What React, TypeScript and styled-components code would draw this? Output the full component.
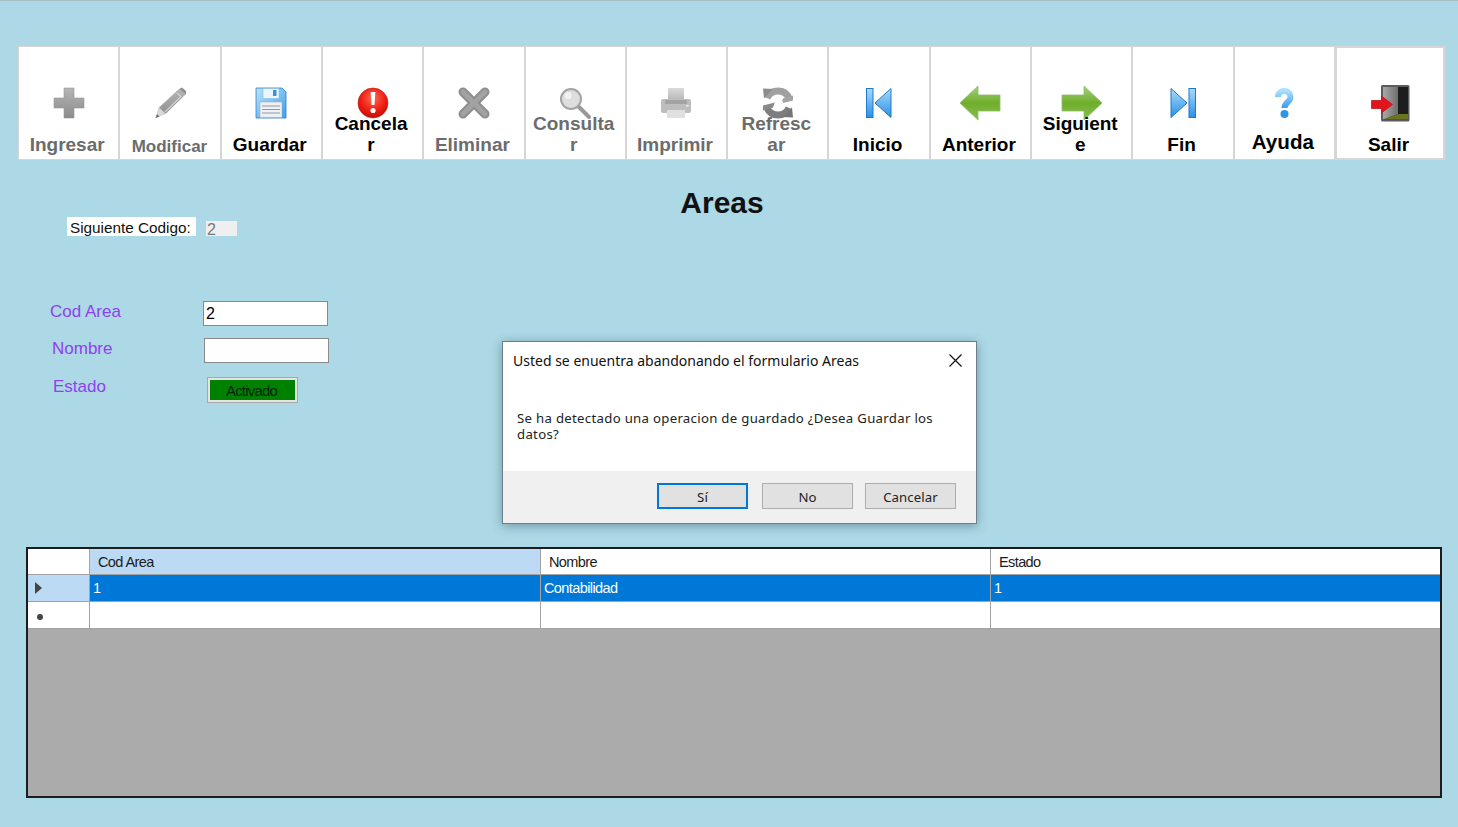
import React from "react";
import styled, { createGlobalStyle } from "styled-components";

const Global = createGlobalStyle`
  html, body { margin: 0; padding: 0; height: 100%; overflow: hidden; }
  body { background: #add8e6; font-family: "Liberation Sans", Arial, sans-serif; }
`;

const Page = styled.div`
  position: relative;
  width: 1458px;
  height: 827px;
  box-sizing: border-box;
  background: #add8e6;
  border-top: 1px solid #a9bcc4;
  padding: 45px 13px 0 18px;
  overflow: hidden;
`;

const Toolbar = styled.div`
  display: grid;
  grid-template-columns: repeat(13, 1fr) 110px;
  height: 114px;
`;

const ToolButton = styled.div<{ $last?: boolean }>`
  display: grid;
  box-sizing: border-box;
  background: #fff;
  border: ${(p) => (p.$last ? "2px" : "1px")} solid #d6d6d6;
  overflow: hidden;
`;

const IconSlot = styled.span`
  grid-area: 1 / 1;
  justify-self: center;
  align-self: start;
  width: 48px;
  height: 48px;
  margin-top: 32px;
`;

const ToolLabel = styled.span<{ $off?: boolean; $size?: number; $bottom?: number; $right?: number }>`
  grid-area: 1 / 1;
  z-index: 1;
  justify-self: center;
  align-self: end;
  text-align: center;
  box-sizing: border-box;
  width: 100%;
  font-weight: 700;
  font-size: ${(p) => p.$size ?? 19}px;
  line-height: 21px;
  padding-bottom: ${(p) => p.$bottom ?? 4}px;
  padding-right: ${(p) => p.$right ?? 3}px;
  color: ${(p) => (p.$off ? "#6c6c6c" : "#000")};
  white-space: pre-line;
`;

const Head = styled.div`
  display: grid;
  height: 72px;
  margin-top: 10px;
`;

const Title = styled.h1`
  grid-area: 1 / 1;
  justify-self: center;
  margin: 16px 19px 0 0;
  font-size: 30px;
  line-height: 34px;
  font-weight: 700;
  color: #111;
`;

const NextCode = styled.div`
  grid-area: 1 / 1;
  display: flex;
  align-items: flex-end;
  gap: 10px;
  margin: 47px 0 0 49px;
  height: 19px;
`;

const NextLabel = styled.span`
  background: #fff;
  width: 129px;
  height: 19px;
  box-sizing: border-box;
  padding-left: 3px;
  font-size: 15.3px;
  line-height: 22px;
  color: #111;
`;

const NextValue = styled.span`
  background: #efefef;
  width: 31px;
  height: 15px;
  box-sizing: border-box;
  padding-left: 1px;
  font-size: 16px;
  line-height: 17px;
  color: #777;
`;

const Form = styled.div`
  display: flex;
  flex-direction: column;
  margin-top: 59px;
  height: 122px;
`;

const FormRow = styled.div<{ $shift: number; $gap: number; $h: number }>`
  display: grid;
  grid-template-columns: ${(p) => p.$gap}px auto;
  margin-left: ${(p) => p.$shift}px;
  height: ${(p) => p.$h}px;
  align-items: start;
`;

const FieldLabel = styled.label`
  font-size: 17px;
  line-height: 20px;
  margin-top: 1px;
  color: #9040ee;
`;

const TextBox = styled.input`
  box-sizing: border-box;
  width: 125px;
  height: 25px;
  border: 1px solid #8a8a8a;
  background: #fff;
  padding: 0 2px;
  margin: 0;
  font: 16px "Liberation Sans", Arial, sans-serif;
  color: #000;
  outline: none;
`;

const StateButton = styled.div`
  box-sizing: border-box;
  width: 91px;
  height: 26px;
  margin-top: 1px;
  border: 1px solid #a8a8a8;
  background: #e4e4e4;
  padding: 2px;
  display: flex;
`;

const StateFill = styled.div`
  flex: 1;
  background: #008000;
  font-size: 15px;
  line-height: 21px;
  letter-spacing: -0.8px;
  text-align: center;
  color: #052505;
  padding-right: 2px;
`;

const Table = styled.div`
  box-sizing: border-box;
  width: 1416px;
  height: 251px;
  margin: 124px 0 0 8px;
  border: 2px solid #1c1c1c;
  background: #ababab;
`;

const TableRow = styled.div<{ $h: number }>`
  display: grid;
  grid-template-columns: 62px 451px 450px 449px;
  height: ${(p) => p.$h}px;
  box-sizing: border-box;
`;

const Cell = styled.div<{ $sel?: boolean; $head?: boolean; $hot?: boolean }>`
  box-sizing: border-box;
  display: flex;
  align-items: center;
  padding-left: ${(p) => (p.$head ? "8px" : "3px")};
  background: ${(p) => (p.$sel ? "#0078d7" : p.$hot ? "#bcdaf3" : "#fff")};
  color: ${(p) => (p.$sel ? "#fff" : "#1b1b1b")};
  border-right: 1px solid #a3a3a3;
  border-bottom: 1px solid #a3a3a3;
  font-size: 14.5px;
  letter-spacing: -0.6px;
  &:last-child { border-right: none; }
`;

const RowHead = styled(Cell)`
  padding-left: 6px;
`;

const Marker = styled.span`
  width: 0;
  height: 0;
  margin-left: 1px;
  border-top: 6px solid transparent;
  border-bottom: 6px solid transparent;
  border-left: 7px solid #444;
`;

const Star = styled.span`
  width: 6px;
  height: 6px;
  margin: 3px 0 0 3px;
  border-radius: 50%;
  background: #444;
`;

const Dialog = styled.div`
  position: absolute;
  left: 502px;
  top: 340px;
  width: 475px;
  height: 183px;
  box-sizing: border-box;
  border: 1px solid #69808a;
  background: #fff;
  box-shadow: 0 2px 10px rgba(40, 70, 85, 0.45);
  display: flex;
  flex-direction: column;
  font-family: "Noto Sans", "Open Sans", sans-serif;
`;

const DialogTop = styled.div`
  display: flex;
  justify-content: space-between;
  align-items: center;
  height: 36px;
  padding: 0 14px 0 10px;
  font-size: 14px;
  color: #111;
`;

const CloseIcon = styled.svg`
  width: 13px;
  height: 13px;
  stroke: #111;
  stroke-width: 1.2;
  fill: none;
`;

const DialogBody = styled.div`
  flex: 1;
  padding: 32px 20px 0 14px;
  font-size: 13.2px;
  line-height: 16px;
  letter-spacing: 0.3px;
  color: #222;
`;

const DialogFoot = styled.div`
  height: 52px;
  background: #f0f0f0;
  display: flex;
  justify-content: flex-end;
  gap: 12px;
  padding: 12px 20px 0 0;
  box-sizing: border-box;
`;

const DlgButton = styled.div<{ $primary?: boolean }>`
  width: 91px;
  height: 26px;
  box-sizing: border-box;
  margin-right: ${(p) => (p.$primary ? "2px" : "0")};
  padding-top: 1px;
  background: #e1e1e1;
  border: ${(p) => (p.$primary ? "2px solid #0078d7" : "1px solid #adadad")};
  display: flex;
  align-items: center;
  justify-content: center;
  font-size: 13.2px;
  letter-spacing: 0.1px;
  color: #222;
`;

const Svg = ({ children }: { children: React.ReactNode }) => (
  <svg width="48" height="48" viewBox="0 0 48 48">{children}</svg>
);

const Defs = () => (
  <svg width="0" height="0" style={{ position: "absolute" }}>
    <defs>
      <linearGradient id="gGray" x1="0" y1="0" x2="0" y2="1">
        <stop offset="0" stopColor="#b5b5b5" />
        <stop offset="1" stopColor="#8b8b8b" />
      </linearGradient>
      <linearGradient id="gPrint" x1="0" y1="0" x2="0" y2="1">
        <stop offset="0" stopColor="#dadada" />
        <stop offset="1" stopColor="#b5b5b5" />
      </linearGradient>
      <radialGradient id="gRed" cx="0.5" cy="0.35" r="0.7">
        <stop offset="0" stopColor="#ff6a55" />
        <stop offset="0.6" stopColor="#ee1c10" />
        <stop offset="1" stopColor="#b80c06" />
      </radialGradient>
      <linearGradient id="gBlue" x1="0" y1="0" x2="1" y2="1">
        <stop offset="0" stopColor="#b7e4fb" />
        <stop offset="1" stopColor="#3f9fe8" />
      </linearGradient>
      <linearGradient id="gNav" x1="0" y1="0" x2="0" y2="1">
        <stop offset="0" stopColor="#a8dcfa" />
        <stop offset="1" stopColor="#2a8fe6" />
      </linearGradient>
      <linearGradient id="gGreen" x1="0" y1="0" x2="0" y2="1">
        <stop offset="0" stopColor="#a5d17a" />
        <stop offset="0.5" stopColor="#6fae2c" />
        <stop offset="1" stopColor="#88bf4f" />
      </linearGradient>
      <linearGradient id="gDoor" x1="0" y1="0" x2="1" y2="0">
        <stop offset="0" stopColor="#a8a8a8" />
        <stop offset="1" stopColor="#6e6e6e" />
      </linearGradient>
      <linearGradient id="gHelp" x1="0" y1="0" x2="0" y2="1">
        <stop offset="0" stopColor="#a9e0fb" />
        <stop offset="1" stopColor="#3a9bec" />
      </linearGradient>
    </defs>
  </svg>
);

const IconPlus = () => (
  <Svg><path d="M19 9h10v10h10v10H29v10H19V29H9V19h10z" fill="url(#gGray)" stroke="#999" strokeWidth="0.6" strokeLinejoin="round" /></Svg>
);
const IconPencil = () => (
  <Svg>
    <path d="M33 10l6.500 5.500-19.500 19-10.500 4.500 3.500-10.500z" fill="url(#gGray)" />
    <path d="M33 10l3-1.500 4 3.500 0 3.500-.5 0z" fill="#8f8f8f" />
    <path d="M13 28.500l7 6.500-10.500 4z" fill="#d8d8d8" />
    <path d="M9.500 39l1.600-3.800 2.300 2.200z" fill="#666" />
    <path d="M31 14l4 3.500-16 15.500" stroke="#d2d2d2" strokeWidth="1.2" fill="none" />
  </Svg>
);
const IconSave = () => (
  <Svg>
    <path d="M9 9h26l4 4v26H9z" fill="url(#gBlue)" stroke="#2f7fcb" strokeWidth="0.8" />
    <rect x="16" y="9.5" width="16" height="10" fill="#eaf5fd" stroke="#7db3de" strokeWidth="0.5" />
    <rect x="26" y="11" width="3.5" height="6" fill="#3f8fd6" />
    <rect x="13" y="23" width="22" height="15.5" fill="#eef1f4" stroke="#93a7b7" strokeWidth="0.5" />
    <path d="M15 27h18M15 30.500h18M15 34h18" stroke="#8d9aa6" strokeWidth="1" />
  </Svg>
);
const IconAlert = () => (
  <Svg>
    <circle cx="24" cy="24" r="15" fill="url(#gRed)" stroke="#c3170f" strokeWidth="0.6" />
    <path d="M21.600 13h4.800l-1 13h-2.800z" fill="#fff" />
    <circle cx="24" cy="31.500" r="2.600" fill="#fff" />
  </Svg>
);
const IconX = () => (
  <Svg>
    <path d="M13 13L35 35M35 13L13 35" stroke="#8e8e8e" strokeWidth="9" strokeLinecap="round" />
    <path d="M13 13L35 35M35 13L13 35" stroke="#a2a2a2" strokeWidth="5" strokeLinecap="round" />
  </Svg>
);
const IconSearch = () => (
  <Svg>
    <path d="M28 28L38 38" stroke="#9a9a9a" strokeWidth="4" strokeLinecap="round" />
    <circle cx="20" cy="20" r="10" fill="#dedede" stroke="#a3a3a3" strokeWidth="2" />
    <circle cx="17" cy="16.500" r="3.500" fill="#f3f3f3" />
  </Svg>
);
const IconPrint = () => (
  <Svg>
    <rect x="16" y="9" width="16" height="13" fill="url(#gPrint)" />
    <rect x="9" y="20" width="30" height="14" rx="2" fill="#bdbdbd" />
    <rect x="13" y="21" width="22" height="4" fill="#a3a3a3" />
    <rect x="15" y="31" width="18" height="8" fill="#e0e0e0" />
    <rect x="34" y="26" width="2.500" height="1.500" fill="#ededed" />
  </Svg>
);
const IconRefresh = () => (
  <Svg>
    <path d="M13 19.200A12 12 0 0 1 35 19.200" stroke="#a0a0a0" strokeWidth="7" fill="none" />
    <path d="M35 28.800A12 12 0 0 1 13 28.800" stroke="#7d7d7d" strokeWidth="7" fill="none" />
    <path d="M9 9.500l10 .5-9 9.500z" fill="#8d8d8d" />
    <path d="M39 38.500l-10-.5 9-9.500z" fill="#757575" />
    <path d="M27 24.500l12-3v-5l-10 3z" fill="#a3a3a3" />
    <path d="M21 23.500l-12 3v5l10-3z" fill="#8a8a8a" />
    <path d="M20 25.500l9-2.500" stroke="#fff" strokeWidth="1.400" />
  </Svg>
);
const IconFirst = () => (
  <Svg>
    <rect x="11.500" y="9.500" width="6.500" height="29" fill="url(#gNav)" stroke="#2178c8" />
    <path d="M36 9.500v29L20 24z" fill="url(#gNav)" stroke="#2178c8" strokeLinejoin="round" />
  </Svg>
);
const IconLast = () => (
  <Svg>
    <path d="M12 9.500v29L28 24z" fill="url(#gNav)" stroke="#2178c8" strokeLinejoin="round" />
    <rect x="30" y="9.500" width="6.500" height="29" fill="url(#gNav)" stroke="#2178c8" />
  </Svg>
);
const IconLeft = () => (
  <Svg>
    <path d="M4 24L22 7v9h22v16H22v9z" fill="url(#gGreen)" stroke="#8dbb6a" strokeWidth="0.8" strokeLinejoin="round" />
  </Svg>
);
const IconRight = () => (
  <Svg>
    <path d="M44 24L26 7v9H4v16h22v9z" fill="url(#gGreen)" stroke="#8dbb6a" strokeWidth="0.8" strokeLinejoin="round" />
  </Svg>
);
const IconHelp = () => (
  <Svg>
    <path d="M18 18c0-4 3-6 6.500-6s6 2.500 6 6c0 5-6 5-6 11" stroke="url(#gHelp)" strokeWidth="6" fill="none" />
    <circle cx="24.500" cy="35" r="4" fill="#2f93ea" />
  </Svg>
);
const IconExit = () => (
  <Svg>
    <rect x="15" y="5" width="28.500" height="36.500" rx="1.500" fill="#5c5c5c" />
    <rect x="17" y="7" width="25" height="32.500" fill="#1d1d1d" />
    <path d="M17 39.500l15-5.500h10v5.500z" fill="#6b7320" />
    <path d="M17 7h15v27l-15 5.500z" fill="url(#gDoor)" />
    <path d="M5.500 20.500h10V16l11 8.500-11 8.500v-4.500h-10z" fill="#e2141c" stroke="#c3151a" strokeWidth="0.8" strokeLinejoin="round" />
  </Svg>
);

const tools: { label: string; icon: React.ReactNode; off?: boolean; size?: number; bottom?: number; right?: number }[] = [
  { label: "Ingresar", icon: <IconPlus />, off: true },
  { label: "Modificar", icon: <IconPencil />, off: true, size: 17, bottom: 2, right: 1 },
  { label: "Guardar", icon: <IconSave /> },
  { label: "Cancela\nr", icon: <IconAlert /> },
  { label: "Eliminar", icon: <IconX />, off: true },
  { label: "Consulta\nr", icon: <IconSearch />, off: true },
  { label: "Imprimir", icon: <IconPrint />, off: true },
  { label: "Refresc\nar", icon: <IconRefresh />, off: true },
  { label: "Inicio", icon: <IconFirst /> },
  { label: "Anterior", icon: <IconLeft /> },
  { label: "Siguient\ne", icon: <IconRight /> },
  { label: "Fin", icon: <IconLast /> },
  { label: "Ayuda", icon: <IconHelp />, size: 20.6, bottom: 7 },
  { label: "Salir", icon: <IconExit />, bottom: 3 },
];

export default function App() {
  return (
    <Page>
      <Global />
      <Defs />
      <Toolbar>
        {tools.map((t, i) => (
          <ToolButton key={t.label} $last={i === tools.length - 1}>
            <IconSlot>{t.icon}</IconSlot>
            <ToolLabel $off={t.off} $size={t.size} $bottom={t.bottom} $right={t.right}>{t.label}</ToolLabel>
          </ToolButton>
        ))}
      </Toolbar>
      <Head>
        <Title>Areas</Title>
        <NextCode>
          <NextLabel>Siguiente Codigo:</NextLabel>
          <NextValue>2</NextValue>
        </NextCode>
      </Head>
      <Form>
        <FormRow $shift={32} $gap={153} $h={37}>
          <FieldLabel>Cod Area</FieldLabel>
          <TextBox defaultValue="2" readOnly />
        </FormRow>
        <FormRow $shift={34} $gap={152} $h={38}>
          <FieldLabel>Nombre</FieldLabel>
          <TextBox readOnly />
        </FormRow>
        <FormRow $shift={35} $gap={154} $h={40}>
          <FieldLabel>Estado</FieldLabel>
          <StateButton><StateFill>Activado</StateFill></StateButton>
        </FormRow>
      </Form>
      <Table>
        <TableRow $h={26}>
          <Cell />
          <Cell $head $hot>Cod Area</Cell>
          <Cell $head>Nombre</Cell>
          <Cell $head>Estado</Cell>
        </TableRow>
        <TableRow $h={27}>
          <RowHead $hot><Marker /></RowHead>
          <Cell $sel>1</Cell>
          <Cell $sel>Contabilidad</Cell>
          <Cell $sel>1</Cell>
        </TableRow>
        <TableRow $h={27}>
          <RowHead><Star /></RowHead>
          <Cell />
          <Cell />
          <Cell />
        </TableRow>
      </Table>
      <Dialog>
        <DialogTop>
          <span>Usted se enuentra abandonando el formulario Areas</span>
          <CloseIcon viewBox="0 0 13 13"><path d="M.5.5l12 12M12.500.5l-12 12" /></CloseIcon>
        </DialogTop>
        <DialogBody>Se ha detectado una operacion de guardado ¿Desea Guardar los datos?</DialogBody>
        <DialogFoot>
          <DlgButton $primary>Sí</DlgButton>
          <DlgButton>No</DlgButton>
          <DlgButton>Cancelar</DlgButton>
        </DialogFoot>
      </Dialog>
    </Page>
  );
}
